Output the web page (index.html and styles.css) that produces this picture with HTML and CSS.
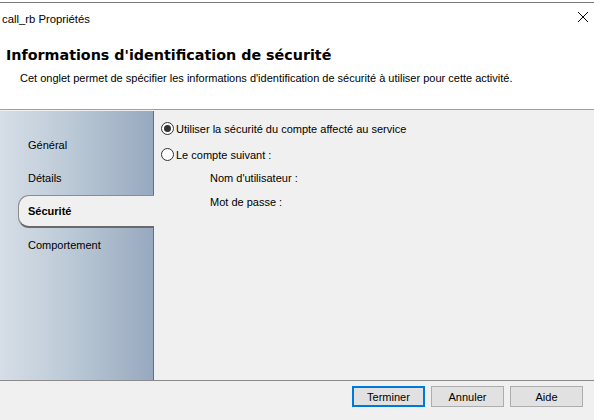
FILE: index.html
```html
<!DOCTYPE html>
<html lang="fr">
<head>
<meta charset="utf-8">
<title>call_rb Propriétés</title>
<link rel="stylesheet" href="styles.css">
</head>
<body>
<div class="window">
  <div class="top">
    <div class="titlebar">
      <span class="wintitle">call_rb Propriétés</span>
      <svg class="close" width="12" height="12" viewBox="0 0 12 12"><path d="M1 1 L11 11 M11 1 L1 11" stroke="#000" stroke-width="1" fill="none"/></svg>
    </div>
    <div class="header">
      <div class="h-title">Informations d'identification de sécurité</div>
      <div class="h-sub">Cet onglet permet de spécifier les informations d'identification de sécurité à utiliser pour cette activité.</div>
    </div>
  </div>
  <div class="main">
    <div class="side">
      <div class="item">Général</div>
      <div class="item">Détails</div>
      <div class="item active">Sécurité</div>
      <div class="item">Comportement</div>
    </div>
    <div class="content">
      <label class="radio-row"><span class="radio checked"></span>Utiliser la sécurité du compte affecté au service</label>
      <label class="radio-row second"><span class="radio"></span>Le compte suivant :</label>
      <div class="fields">
        <div class="field">Nom d'utilisateur :</div>
        <div class="field">Mot de passe :</div>
      </div>
    </div>
  </div>
  <div class="footer">
    <button class="btn default">Terminer</button>
    <button class="btn">Annuler</button>
    <button class="btn">Aide</button>
  </div>
</div>
</body>
</html>
```
FILE: styles.css
```css
html, body {
  margin: 0;
  padding: 0;
  width: 594px;
  height: 420px;
  overflow: hidden;
  background: #f0f0f0;
  font-family: "Liberation Sans", Arial, sans-serif;
  font-size: 11px;
  color: #000;
}
.window {
  width: 594px;
  height: 420px;
  display: flex;
  flex-direction: column;
}
.top {
  background: #fff;
  padding-top: 2px;
}
.titlebar {
  border-top: 1px solid #7a7a7a;
  height: 32px;
  display: flex;
  align-items: center;
  justify-content: space-between;
  padding: 0 5px 0 2px;
}
.wintitle {
  font-size: 11.3px;
}
.close {
  margin-top: -4px;
}
.header {
  border-bottom: 1px solid #a0a0a0;
  padding-top: 10px;
  box-sizing: border-box;
  height: 75px;
}
.h-title {
  font-family: "DejaVu Sans", Verdana, sans-serif;
  font-weight: bold;
  font-size: 14.3px;
  line-height: 20px;
  padding-left: 6px;
  color: #000;
}
.h-sub {
  line-height: 16px;
  margin-top: 5px;
  padding-left: 20px;
  font-size: 11px;
}
.main {
  display: flex;
  height: 269px;
  border-bottom: 1px solid #8a8a8a;
  margin-top: 1px;
}
.side {
  width: 153px;
  border-right: 1px solid #6e6e6e;
  background: linear-gradient(to right, #d6dee7 0%, #bccad7 45%, #97a9bf 100%);
  padding-top: 18px;
  box-sizing: content-box;
}
.item {
  height: 32px;
  line-height: 32px;
  padding-left: 28px;
  margin-bottom: 1px;
}
.item.active {
  margin-left: 18px;
  padding-left: 9px;
  margin-right: -1px;
  background: #f0f0f0;
  border: 1px solid #8c8c8c;
  border-right: none;
  border-bottom: 2px solid #6a6a6a;
  border-radius: 11px 0 0 11px;
  height: 30px;
  line-height: 30px;
  font-weight: bold;
  position: relative;
}
.content {
  flex: 1;
  padding: 11px 0 0 7px;
}
.radio-row {
  display: flex;
  align-items: center;
  height: 13px;
  margin-bottom: 13px;
  gap: 2px;
}
.radio-row.second {
  margin-bottom: 0;
}
.radio {
  width: 11px;
  height: 11px;
  border: 1px solid #333;
  border-radius: 50%;
  background: #fff;
  position: relative;
  box-sizing: content-box;
}
.radio.checked::after {
  content: "";
  position: absolute;
  left: 2px;
  top: 2px;
  width: 7px;
  height: 7px;
  border-radius: 50%;
  background: #333;
}
.fields {
  margin-top: 5px;
}
.field {
  padding-left: 49px;
  height: 24px;
  line-height: 24px;
}
.footer {
  flex: 1;
  display: flex;
  justify-content: flex-end;
  align-items: flex-start;
  gap: 6px;
  padding: 5px 11px 0 0;
}
.btn {
  width: 73px;
  height: 21px;
  background: #e1e1e1;
  border: 1px solid #adadad;
  font-family: "Liberation Sans", Arial, sans-serif;
  font-size: 11px;
  color: #000;
  padding: 0;
  margin: 0;
}
.btn.default {
  border: 2px solid #0078d7;
}
```
